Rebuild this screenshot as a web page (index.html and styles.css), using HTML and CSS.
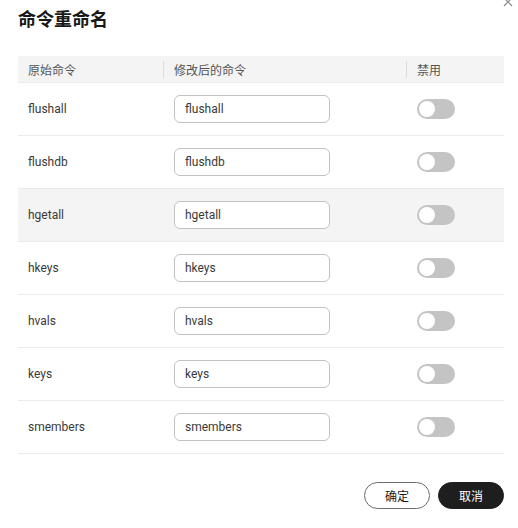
FILE: index.html
```html
<!DOCTYPE html>
<html lang="zh">
<head>
<meta charset="utf-8">
<link rel="stylesheet" href="styles.css">
</head>
<body>
<div class="dialog">
  <span class="close" aria-label="关闭">
    <svg width="10" height="10" viewBox="0 0 10 10"><path d="M1 1 L9 9 M9 1 L1 9" stroke="#8a8a8a" stroke-width="1.2" fill="none"/></svg>
  </span>
  <h1 class="title">命令重命名</h1>
  <div class="table">
    <div class="row head">
      <div class="cell c1">原始命令</div>
      <div class="cell c2"><span class="sep"></span>修改后的命令</div>
      <div class="cell c3"><span class="sep"></span>禁用</div>
    </div>
    <div class="row">
      <div class="cell c1">flushall</div>
      <div class="cell c2"><input class="input" value="flushall"></div>
      <div class="cell c3"><span class="switch"><span class="knob"></span></span></div>
    </div>
    <div class="row">
      <div class="cell c1">flushdb</div>
      <div class="cell c2"><input class="input" value="flushdb"></div>
      <div class="cell c3"><span class="switch"><span class="knob"></span></span></div>
    </div>
    <div class="row hover">
      <div class="cell c1">hgetall</div>
      <div class="cell c2"><input class="input" value="hgetall"></div>
      <div class="cell c3"><span class="switch"><span class="knob"></span></span></div>
    </div>
    <div class="row">
      <div class="cell c1">hkeys</div>
      <div class="cell c2"><input class="input" value="hkeys"></div>
      <div class="cell c3"><span class="switch"><span class="knob"></span></span></div>
    </div>
    <div class="row">
      <div class="cell c1">hvals</div>
      <div class="cell c2"><input class="input" value="hvals"></div>
      <div class="cell c3"><span class="switch"><span class="knob"></span></span></div>
    </div>
    <div class="row">
      <div class="cell c1">keys</div>
      <div class="cell c2"><input class="input" value="keys"></div>
      <div class="cell c3"><span class="switch"><span class="knob"></span></span></div>
    </div>
    <div class="row">
      <div class="cell c1">smembers</div>
      <div class="cell c2"><input class="input" value="smembers"></div>
      <div class="cell c3"><span class="switch"><span class="knob"></span></span></div>
    </div>
  </div>
  <div class="footer">
    <button class="btn btn-outline">确定</button>
    <button class="btn btn-dark">取消</button>
  </div>
</div>
</body>
</html>
```
FILE: styles.css
```css
html, body {
  margin: 0;
  padding: 0;
  background: #ffffff;
}
body {
  font-family: Roboto, "Noto Sans CJK SC", sans-serif;
  color: #252b3a;
}
.dialog {
  position: relative;
  width: 518px;
  height: 528px;
  box-sizing: border-box;
  padding: 6px 14px 0 18px;
}
.close {
  position: absolute;
  top: -3px;
  left: 503px;
  width: 10px;
  height: 10px;
  display: block;
}
.close svg { display: block; }
.title {
  margin: 0;
  font-size: 18px;
  line-height: 24px;
  font-weight: 700;
  color: #191919;
  font-family: "Noto Sans CJK SC", sans-serif;
}
.table {
  margin-top: 26px;
  width: 486px;
}
.row {
  display: grid;
  grid-template-columns: 145px 243px 98px;
  height: 53px;
  box-sizing: border-box;
  border-bottom: 1px solid #ebebeb;
  align-items: center;
  font-size: 12px;
  color: #3a3a3a;
}
.row.head {
  height: 27px;
  background: #f4f4f4;
  border-bottom: 1px solid #ececec;
  color: #555555;
}
.row.hover {
  background: #f4f4f4;
}
.cell {
  position: relative;
  display: flex;
  align-items: center;
  height: 100%;
  box-sizing: border-box;
}
.c1 { padding-left: 10px; }
.c2, .c3 { padding-left: 11px; }
.sep {
  position: absolute;
  left: 0;
  top: 5px;
  width: 1px;
  height: 17px;
  background: #dcdcdc;
}
.input {
  width: 156px;
  height: 28px;
  box-sizing: border-box;
  border: 1px solid #c2c2c2;
  border-radius: 6px;
  padding: 0 10px;
  font-family: Roboto, "Noto Sans CJK SC", sans-serif;
  font-size: 12px;
  color: #3a3a3a;
  background: #ffffff;
  outline: none;
}
.switch {
  position: relative;
  display: inline-block;
  width: 38px;
  height: 20px;
  border-radius: 10px;
  background: #c4c4c4;
  margin-top: -1px;
}
.knob {
  position: absolute;
  left: 2px;
  top: 2px;
  width: 16px;
  height: 16px;
  border-radius: 50%;
  background: #ffffff;
}
.footer {
  display: flex;
  justify-content: flex-end;
  gap: 8px;
  margin-top: 28px;
  width: 486px;
}
.btn {
  width: 66px;
  height: 27px;
  border-radius: 14px;
  font-family: "Noto Sans CJK SC", sans-serif;
  font-size: 12px;
  padding: 0;
  cursor: pointer;
}
.btn-outline {
  background: #ffffff;
  border: 1px solid #6b6b6b;
  color: #191919;
}
.btn-dark {
  background: #1e1e1e;
  border: 1px solid #1e1e1e;
  color: #ffffff;
}
```
